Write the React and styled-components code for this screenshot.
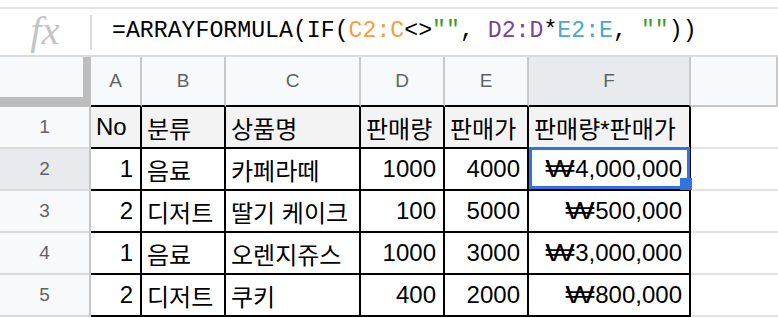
import React from 'react';
import styled, {createGlobalStyle} from "styled-components";


const GlobalStyle = createGlobalStyle`
  body {
    margin: 0;
    background: #fff;
    font-family: "Liberation Sans", "Noto Sans CJK KR", sans-serif;
  }
`

const FormulaBar = styled.div`
  margin-top: 7px;
  height: 46px;
  border-top: 2px solid #e2e3e5;
  border-bottom: 2px solid #dadce0;
  display: flex;
  align-items: center;
`

const FxBox = styled.div`
  width: 90px;
  display: flex;
  justify-content: center;
  font-family: "Liberation Serif", serif;
  font-style: italic;
  font-size: 41px;
  color: #c4c4c4;
  padding-bottom: 4px;
`

const Divider = styled.div`
  width: 2px;
  height: 35px;
  background: #dadce0;
`

const Formula = styled.div`
  margin-left: 20px;
  font-family: "Liberation Mono", monospace;
  font-size: 23.2px;
  color: #000;
  white-space: pre;
  padding-bottom: 3px;
`

const Tok = styled.span`
  color: ${p => p.$c || '#000'};
`

const Grid = styled.div`
  display: grid;
  grid-template-columns: 91px 51px 84px 135px 84px 84px 162px 1fr;
  grid-auto-rows: 42px;
  grid-template-rows: 50px;
`

const Corner = styled.div`
  background: #f8f9fa;
  border-right: 2px solid #c0c0c0;
  border-bottom: 2px solid #c0c0c0;
  box-shadow: inset -6px -8px 0 0 #bdbdbd;
`

const ColHead = styled.div`
  background: ${p => p.$selected ? '#e8eaed' : '#f8f9fa'};
  border-right: 2px solid #c8c8c8;
  border-bottom: 2px solid ${p => p.$inTable ? '#000' : '#c8c8c8'};
  display: flex;
  align-items: center;
  justify-content: center;
  font-size: 19px;
  color: #5f6368;
`

const RowHead = styled.div`
  background: ${p => p.$selected ? '#e8eaed' : '#f8f9fa'};
  border-right: 2px solid #c4c4c4;
  border-bottom: 2px solid #dadada;
  display: flex;
  align-items: center;
  justify-content: center;
  font-size: 19px;
  color: #5f6368;
`

const Cell = styled.div`
  position: relative;
  background: ${p => p.$head ? '#f3f3f3' : '#fff'};
  border-right: 2px solid #000;
  border-bottom: 2px solid #000;
  display: flex;
  align-items: center;
  justify-content: ${p => p.$right ? 'flex-end' : 'flex-start'};
  padding: 0 7px 0 5px;
  font-size: 24px;
  color: #000;
  white-space: nowrap;
`

const EmptyCell = styled.div`
  border-bottom: 2px solid #e2e2e2;
`

// the won sign is drawn much wider in the reference font
const Won = styled.span`
  display: inline-block;
  width: 28px;
  margin-right: 1px;
  text-align: center;
  transform: scaleX(1.3);
`

const Selection = styled.div`
  position: absolute;
  top: -2px;
  left: 0;
  right: -1px;
  bottom: 0;
  border: 3px solid #2f74e0;
  pointer-events: none;
`

const Handle = styled.div`
  position: absolute;
  right: -5px;
  bottom: -4px;
  width: 12px;
  height: 12px;
  background: #2f74e0;
`

const columns = ['A', 'B', 'C', 'D', 'E', 'F'];

const rows = [
    ['No', '분류', '상품명', '판매량', '판매가', '판매량*판매가'],
    [1, '음료', '카페라떼', 1000, 4000, '4,000,000'],
    [2, '디저트', '딸기 케이크', 100, 5000, '500,000'],
    [1, '음료', '오렌지쥬스', 1000, 3000, '3,000,000'],
    [2, '디저트', '쿠키', 400, 2000, '800,000'],
];


const App = () => {

    return (
        <>
            <GlobalStyle/>
            <FormulaBar>
                <FxBox>fx</FxBox>
                <Divider/>
                <Formula>
                    <Tok>=ARRAYFORMULA(IF(</Tok>
                    <Tok $c="#f0a040">C2:C</Tok>
                    <Tok>{'<>'}</Tok>
                    <Tok $c="#3f9a2a">""</Tok>
                    <Tok>, </Tok>
                    <Tok $c="#7e3f98">D2:D</Tok>
                    <Tok>*</Tok>
                    <Tok $c="#4aa8cc">E2:E</Tok>
                    <Tok>, </Tok>
                    <Tok $c="#3f9a2a">""</Tok>
                    <Tok>))</Tok>
                </Formula>
            </FormulaBar>
            <Grid>
                <Corner/>
                {columns.map((c) => (
                    <ColHead key={c} $inTable $selected={c === 'F'}>{c}</ColHead>
                ))}
                <ColHead/>
                {rows.map((row, r) => (
                    <React.Fragment key={r}>
                        <RowHead $selected={r === 1}>{r + 1}</RowHead>
                        {row.map((value, c) => {
                            const head = r === 0;
                            const isNumber = !head && (c === 0 || c >= 3);
                            return (
                                <Cell key={c} $head={head} $right={isNumber}>
                                    {!head && c === 5 && <Won>₩</Won>}
                                    {value}
                                    {r === 1 && c === 5 && (
                                        <Selection>
                                            <Handle/>
                                        </Selection>
                                    )}
                                </Cell>
                            );
                        })}
                        <EmptyCell/>
                    </React.Fragment>
                ))}
            </Grid>
        </>
    );
};

export default App;
